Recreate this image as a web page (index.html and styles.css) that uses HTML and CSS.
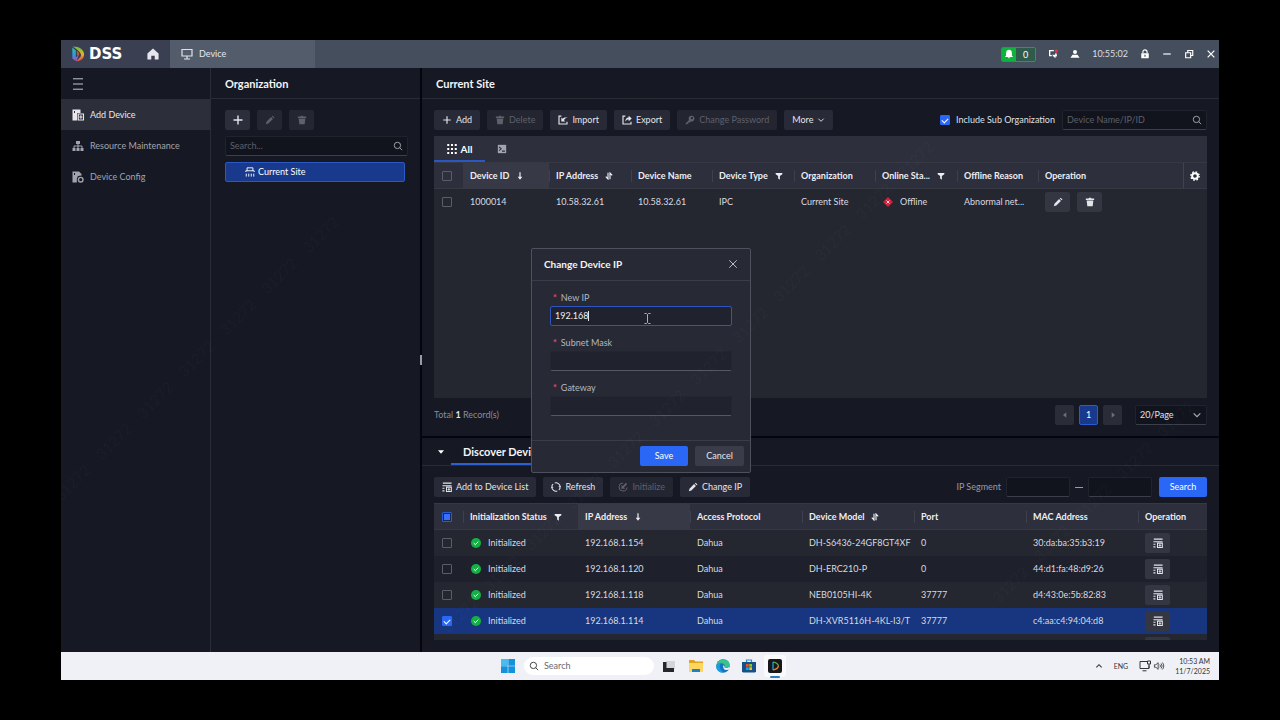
FILE: index.html
```html
<!DOCTYPE html>
<html lang="en">
<head>
<meta charset="utf-8">
<title>DSS - Device</title>
<link rel="stylesheet" href="styles.css">
</head>
<body>
<svg class="defs" aria-hidden="true">
  <symbol id="plus" viewBox="0 0 12 12"><path d="M6 1.5v9M1.5 6h9" stroke="currentColor" stroke-width="1.4" fill="none"/></symbol>
  <symbol id="pencil" viewBox="0 0 12 12"><path d="M1 11l.8-3 5.500-5.500 2.200 2.200L4 10.200zM8.200 1.800l1-1 2.200 2.200-1 1z" fill="currentColor"/></symbol>
  <symbol id="trash" viewBox="0 0 12 12"><path d="M1 1.800h3.300L5 .8h2l.7 1H11v1.700H1zM2 4.300h8L9.200 11H2.800z" fill="currentColor"/></symbol>
  <symbol id="search" viewBox="0 0 12 12"><circle cx="5.3" cy="5.3" r="3.8" fill="none" stroke="currentColor" stroke-width="1.1"/><path d="M8 8l3 3" stroke="currentColor" stroke-width="1.1"/></symbol>
  <symbol id="chev" viewBox="0 0 12 12"><path d="M2 4l4 4 4-4" fill="none" stroke="currentColor" stroke-width="1.4"/></symbol>
  <symbol id="import" viewBox="0 0 12 12"><path d="M4 1.3H1.200v9.500h9.600V8" fill="none" stroke="currentColor" stroke-width="1.4"/><path d="M4 3v4.800h4.800L7.200 6.200c.7-1.500 1.900-2.400 4.300-2.800-2.500-.9-4.700-.2-5.900 1.200z" fill="currentColor"/></symbol>
  <symbol id="export" viewBox="0 0 12 12"><path d="M4 1.300H1.200v9.500h9.600V8" fill="none" stroke="currentColor" stroke-width="1.400"/><path d="M4 8c0-3 1.300-4.700 4-4.900V.8l3.700 3.400L8 7.500V5.300C6 5.300 5 6 4 8z" fill="currentColor"/></symbol>
  <symbol id="key" viewBox="0 0 12 12"><path d="M4.800 6A3.500 3.500 0 1 1 7 7.700L5.500 9H4v1.500H2.800L1.500 11.500.5 10.500z" fill="currentColor"/><circle cx="8.300" cy="3.800" r="1.300" fill="#232531"/></symbol>
  <symbol id="funnel" viewBox="0 0 12 12"><path d="M1 1.500h10v1.700L7.300 6v5.500L4.700 9.800V6L1 3.200z" fill="currentColor"/></symbol>
  <symbol id="down" viewBox="0 0 12 12"><path d="M6 .5v9" stroke="currentColor" stroke-width="1.800"/><path d="M2.500 7h7L6 11.500z" fill="currentColor"/></symbol>
  <symbol id="sort" viewBox="0 0 12 12"><path d="M4.500 1v9.500L1.200 7M7.500 11V1.500l3.300 3.500" fill="none" stroke="currentColor" stroke-width="1.700"/></symbol>
  <symbol id="addlist" viewBox="0 0 12 12"><path d="M1 1.300h10.500M.5 4.400H11.500M.5 7.500h2.500M.5 10.600h2.500" fill="none" stroke="currentColor" stroke-width="1.300"/><path fill-rule="evenodd" d="M4.800 5.500h7v6.500h-7zM6 6.800v4h4.600v-4zM7.700 7.300h1.200v1h1.100v1.100H8.900v1H7.700v-1H6.600V8.300h1.100z" fill="currentColor"/></symbol>
  <symbol id="refresh" viewBox="0 0 12 12"><path d="M4.500 1.200A5 5 0 0 1 11 5.800M7.500 10.800A5 5 0 0 1 1 6.200M1 5a5 5 0 0 1 1.600-2.500M11 7a5 5 0 0 1-1.600 2.500" fill="none" stroke="currentColor" stroke-width="1.300"/><path d="M9 5h3.500l-1.700 2.500zM-.5 7H3L1.200 4.500z" fill="currentColor"/></symbol>
  <symbol id="init" viewBox="0 0 12 12"><path d="M6 1.200A4.800 4.800 0 1 0 10.800 6.500" fill="none" stroke="currentColor" stroke-width="1.200"/><path d="M4 3.500V8h4.500L7.200 6.500 11 2.500 9.500 1 5.500 5z" fill="currentColor"/></symbol>
  <symbol id="ok" viewBox="0 0 12 12"><circle cx="6" cy="6" r="6" fill="#15b045"/><path d="M3.200 6l2 2 3.500-3.600" fill="none" stroke="#fff" stroke-width="1.200"/></symbol>
  <linearGradient id="rim" x1="0" y1="0" x2="0" y2="1"><stop offset="0" stop-color="#5fc04a"/><stop offset=".5" stop-color="#e8b02a"/><stop offset="1" stop-color="#e2453a"/></linearGradient>
  <linearGradient id="stem" x1="0" y1="0" x2="0" y2="1"><stop offset="0" stop-color="#2fc3a0"/><stop offset=".5" stop-color="#2a9de0"/><stop offset="1" stop-color="#a74fb0"/></linearGradient>
  <symbol id="dsslogo" viewBox="0 0 16 18"><path d="M2 .5C10 .5 15 4.500 15 9.500c0 4-3.500 7.500-9 8l3.500-4c2-1.200 2.500-3 1.500-5C9.500 5.500 6 3.500 2 .5z" fill="url(#rim)"/><path d="M1.500 1.500L5.500 5v8l3-2.500-2 6.500-2.500-1-2.500-2z" fill="url(#stem)"/><path d="M6.500 5.500c3 1.500 3.500 4 1 6.500z" fill="#e0572e"/></symbol>
</svg>

<div class="app">
  <header class="titlebar">
    <div class="brand"><svg class="logo"><use href="#dsslogo"/></svg><span class="brand-name">DSS</span>
      <button class="plain home" aria-label="Home"><svg class="i12" viewBox="0 0 14 14"><path d="M7 .5l6.500 6V13.500H9V9H5v4.500H.5v-7z" fill="#e6e7ec"/></svg></button>
    </div>
    <a class="apptab" href="#"><svg class="i12" viewBox="0 0 12 12"><path d="M1 1.500h10v6.500H1zM6 8v2.500M3 11h6" fill="none" stroke="#dfe3ea" stroke-width="1.200"/></svg>Device</a>
    <div class="status">
      <button class="bell" aria-label="Alarms 0"><span class="bell-ico"><svg class="i10" viewBox="0 0 12 12"><path d="M6 1c2.500 0 3.500 2 3.500 4v3l1.500 1.500H1L2.500 8V5c0-2 1-4 3.500-4zM4.500 10h3L6 11.500z" fill="#fff"/></svg></span><span class="bell-n">0</span></button>
      <button class="plain" aria-label="Messages"><svg class="i10" viewBox="0 0 12 12"><path d="M7 2H2v6h2.500M9.500 5v3.500" fill="none" stroke="#fff" stroke-width="1.600"/><path d="M5 7h5.500v2H9v2L6.500 9z" fill="#fff"/><circle cx="10" cy="2.500" r="1.900" fill="#f0303e"/></svg></button>
      <button class="plain" aria-label="User"><svg class="i10" viewBox="0 0 12 12"><circle cx="6" cy="3.500" r="2.400" fill="#fff"/><path d="M3 7h6l2.500 3.500H.5z" fill="#fff"/></svg></button>
      <time class="clock">10:55:02</time>
      <button class="plain" aria-label="Lock"><svg class="i10" viewBox="0 0 12 12"><path d="M3.500 5V3.500a2.500 2.500 0 0 1 5 0V5" fill="none" stroke="#fff" stroke-width="1.400"/><path fill-rule="evenodd" d="M1.500 5h9v6h-9zM5.300 6.800v2.400h1.400V6.800z" fill="#fff"/></svg></button>
      <button class="plain" aria-label="Minimize"><svg class="i10" viewBox="0 0 12 12"><path d="M1.500 6h9" stroke="#fff" stroke-width="1.400"/></svg></button>
      <button class="plain" aria-label="Restore"><svg class="i10" viewBox="0 0 12 12"><path d="M2 4.500h6v6H2zM4.500 4V1.800h6v6H8.500" fill="none" stroke="#fff" stroke-width="1.400"/></svg></button>
      <button class="plain" aria-label="Close"><svg class="i10" viewBox="0 0 12 12"><path d="M2 2l8 8M10 2l-8 8" stroke="#fff" stroke-width="1.500"/></svg></button>
    </div>
  </header>

  <div class="body">
    <nav class="side">
      <button class="plain burger" aria-label="Menu"><svg class="i12" viewBox="0 0 12 12"><path d="M1 .8h10M1 6h10M1 11.200h10" stroke="#c5c6cd" stroke-width="1"/></svg></button>
      <a href="#" class="nav-item active"><svg class="i12" viewBox="0 0 12 12"><path fill-rule="evenodd" d="M.5.5h8V4H5.200v7.500H.5zM2 2v2h1V2z" fill="currentColor"/><path d="M6.300 5h5.200v6H6.300zM8.900 6.300v3.400M7.200 8h3.400" fill="none" stroke="currentColor" stroke-width="1.100"/></svg>Add Device</a>
      <a href="#" class="nav-item"><svg class="i12" viewBox="0 0 12 12"><path d="M4 1h4v3H4zM.5 8h3v3h-3zM4.500 8h3v3h-3zM8.500 8h3v3h-3z" fill="currentColor"/><path d="M6 4v4M2 8V6h8v2" fill="none" stroke="currentColor"/></svg>Resource Maintenance</a>
      <a href="#" class="nav-item"><svg class="i12" viewBox="0 0 12 12"><path fill-rule="evenodd" d="M.5.5H7l2.500 2.500v1.500L6 5 4.800 7.500v4H.5zM2 2v2h1V2z" fill="currentColor"/><circle cx="8.700" cy="8.700" r="2.300" fill="none" stroke="currentColor" stroke-width="1.400"/></svg>Device Config</a>
    </nav>

    <section class="org">
      <h2 class="head">Organization</h2>
      <div class="org-body">
        <div class="org-tools">
          <button class="btn sq" aria-label="Add"><svg class="i12"><use href="#plus"/></svg></button>
          <button class="btn sq" aria-label="Edit" disabled><svg class="i10"><use href="#pencil"/></svg></button>
          <button class="btn sq" aria-label="Delete" disabled><svg class="i10"><use href="#trash"/></svg></button>
        </div>
        <label class="box"><input type="text" placeholder="Search..." aria-label="Search organizations"><svg class="i10"><use href="#search"/></svg></label>
        <button class="tree"><svg class="i10" viewBox="0 0 12 12"><path d="M2.500 4.500V1h7v3.500M1 6V4.500h10V6M1.500 11.500V8M4.500 11.500V8M7.500 11.500V8M10.500 11.500V8" fill="none" stroke="#fff" stroke-width="1.100"/></svg>Current Site</button>
      </div>
      <span class="grip"></span>
    </section>

    <main class="main">
      <section class="devices">
        <h2 class="head">Current Site</h2>
        <div class="pad">
          <div class="tools">
            <button class="btn"><svg class="i10"><use href="#plus"/></svg>Add</button>
            <button class="btn" disabled><svg class="i10"><use href="#trash"/></svg>Delete</button>
            <button class="btn"><svg class="i10"><use href="#import"/></svg>Import</button>
            <button class="btn"><svg class="i10"><use href="#export"/></svg>Export</button>
            <button class="btn" disabled><svg class="i10"><use href="#key"/></svg>Change Password</button>
            <button class="btn more">More<svg class="i8"><use href="#chev"/></svg></button>
            <label class="include"><input class="cb" type="checkbox" checked>Include Sub Organization</label>
            <label class="box find"><input type="text" placeholder="Device Name/IP/ID" aria-label="Find device"><svg class="i10"><use href="#search"/></svg></label>
          </div>
          <div class="panel">
            <div class="tabs">
              <button class="plain tab on"><svg class="i10" viewBox="0 0 12 12"><path d="M1.500 0v12M6 0v12M10.500 0v12" stroke="#fff" stroke-width="2.400" stroke-dasharray="2.400 2.400"/></svg>All</button>
              <button class="plain tab" aria-label="Encoder"><svg class="i10" viewBox="0 0 12 12"><path d="M1 1h10v10H1z" fill="#a3a5ae"/><path d="M2.500 3.500L5 5.800 2.500 8M6 8.500h3.500" fill="none" stroke="#2d2f3c" stroke-width="1.300"/></svg></button>
            </div>
            <table class="grid">
              <colgroup><col class="c-cb"><col class="c-id"><col class="c-a"><col class="c-b"><col class="c-a"><col class="c-b"><col class="c-a"><col class="c-b"><col><col class="c-gear"></colgroup>
              <thead><tr>
                <th><input class="cb" type="checkbox" aria-label="Select all"></th>
                <th class="sorted">Device ID<svg class="i8"><use href="#down"/></svg></th>
                <th>IP Address<svg class="i8"><use href="#sort"/></svg></th>
                <th>Device Name</th>
                <th>Device Type<svg class="i8"><use href="#funnel"/></svg></th>
                <th>Organization</th>
                <th>Online Sta...<svg class="i8"><use href="#funnel"/></svg></th>
                <th>Offline Reason</th>
                <th>Operation</th>
                <th class="gear"><button class="plain" aria-label="Columns"><svg class="i10" viewBox="0 0 12 12"><circle cx="6" cy="6" r="3.400" fill="none" stroke="#fff" stroke-width="2.400"/><circle cx="6" cy="6" r="5" fill="none" stroke="#fff" stroke-width="1.600" stroke-dasharray="2 1.930"/></svg></button></th>
              </tr></thead>
              <tbody><tr>
                <td><input class="cb" type="checkbox" aria-label="Select 1000014"></td>
                <td>1000014</td><td>10.58.32.61</td><td>10.58.32.61</td><td>IPC</td><td>Current Site</td>
                <td><svg class="i10 lead" viewBox="0 0 12 12"><path d="M6 0l6 6-6 6-6-6z" fill="#d81e3a"/><path d="M4.200 4.200l3.600 3.600M7.800 4.200L4.200 7.800" stroke="#fff"/></svg>Offline</td>
                <td>Abnormal net...</td>
                <td><span class="ops"><button class="btn sq" aria-label="Edit"><svg class="i10"><use href="#pencil"/></svg></button><button class="btn sq" aria-label="Delete"><svg class="i10"><use href="#trash"/></svg></button></span></td>
                <td></td>
              </tr></tbody>
            </table>
          </div>
          <div class="pager">
            <span class="total">Total <b>1</b> Record(s)</span>
            <button class="btn pg" aria-label="Previous" disabled><svg class="i8" viewBox="0 0 12 12"><path d="M8 2v8L3 6z" fill="currentColor"/></svg></button>
            <button class="btn pg cur">1</button>
            <button class="btn pg" aria-label="Next" disabled><svg class="i8" viewBox="0 0 12 12"><path d="M4 2v8l5-4z" fill="currentColor"/></svg></button>
            <label class="box size"><select aria-label="Page size"><option>20/Page</option></select><svg class="i10"><use href="#chev"/></svg></label>
          </div>
        </div>
      </section>

      <section class="discover">
        <div class="disc-head">
          <button class="plain fold" aria-label="Collapse"><svg class="i8" viewBox="0 0 12 12"><path d="M1.500 3.500h9L6 8.500z" fill="#fff"/></svg></button>
          <h2 class="disc-tab">Discover Device</h2>
        </div>
        <div class="pad">
          <div class="tools">
            <button class="btn"><svg class="i10"><use href="#addlist"/></svg>Add to Device List</button>
            <button class="btn"><svg class="i10"><use href="#refresh"/></svg>Refresh</button>
            <button class="btn" disabled><svg class="i10"><use href="#init"/></svg>Initialize</button>
            <button class="btn"><svg class="i10"><use href="#pencil"/></svg>Change IP</button>
            <label class="seg" for="seg-from">IP Segment</label>
            <span class="box ip"><input id="seg-from" type="text"></span>
            <span class="dash"></span>
            <span class="box ip"><input type="text" aria-label="IP segment end"></span>
            <button class="btn primary">Search</button>
          </div>
          <div class="list">
            <table class="grid zebra">
              <colgroup><col class="c-cb"><col class="c-st"><col class="c-w"><col class="c-w"><col class="c-w"><col class="c-w"><col class="c-w"><col></colgroup>
              <thead><tr>
                <th><input class="cb part" type="checkbox" aria-label="Select all found"></th>
                <th>Initialization Status<svg class="i8"><use href="#funnel"/></svg></th>
                <th class="sorted">IP Address<svg class="i8"><use href="#down"/></svg></th>
                <th>Access Protocol</th>
                <th>Device Model<svg class="i8"><use href="#sort"/></svg></th>
                <th>Port</th><th>MAC Address</th><th>Operation</th>
              </tr></thead>
              <tbody>
                <tr><td><input class="cb" type="checkbox" aria-label="Select 192.168.1.154"></td><td><svg class="i10 lead"><use href="#ok"/></svg>Initialized</td><td>192.168.1.154</td><td>Dahua</td><td>DH-S6436-24GF8GT4XF</td><td>0</td><td>30:da:ba:35:b3:19</td><td><button class="btn sq" aria-label="Add to list"><svg class="i10"><use href="#addlist"/></svg></button></td></tr>
                <tr><td><input class="cb" type="checkbox" aria-label="Select 192.168.1.120"></td><td><svg class="i10 lead"><use href="#ok"/></svg>Initialized</td><td>192.168.1.120</td><td>Dahua</td><td>DH-ERC210-P</td><td>0</td><td>44:d1:fa:48:d9:26</td><td><button class="btn sq" aria-label="Add to list"><svg class="i10"><use href="#addlist"/></svg></button></td></tr>
                <tr><td><input class="cb" type="checkbox" aria-label="Select 192.168.1.118"></td><td><svg class="i10 lead"><use href="#ok"/></svg>Initialized</td><td>192.168.1.118</td><td>Dahua</td><td>NEB0105HI-4K</td><td>37777</td><td>d4:43:0e:5b:82:83</td><td><button class="btn sq" aria-label="Add to list"><svg class="i10"><use href="#addlist"/></svg></button></td></tr>
                <tr class="sel"><td><input class="cb" type="checkbox" checked aria-label="Select 192.168.1.114"></td><td><svg class="i10 lead"><use href="#ok"/></svg>Initialized</td><td>192.168.1.114</td><td>Dahua</td><td>DH-XVR5116H-4KL-I3/T</td><td>37777</td><td>c4:aa:c4:94:04:d8</td><td><button class="btn sq" aria-label="Add to list"><svg class="i10"><use href="#addlist"/></svg></button></td></tr>
                <tr><td></td><td></td><td></td><td></td><td></td><td></td><td></td><td><button class="btn sq" aria-label="Add to list"></button></td></tr>
              </tbody>
            </table>
          </div>
        </div>
      </section>
    </main>
  </div>

  <div class="scrim">
    <form class="dialog" role="dialog" aria-labelledby="dlg-title">
      <div class="dlg-head"><h2 id="dlg-title">Change Device IP</h2><button type="button" class="plain" aria-label="Close dialog"><svg class="i10" viewBox="0 0 12 12"><path d="M1.500 1.500l9 9M10.500 1.500l-9 9" stroke="#b9bbc3" stroke-width="1.200"/></svg></button></div>
      <div class="dlg-body">
        <div class="field"><label for="new-ip">New IP</label><div class="inwrap"><input id="new-ip" class="focus" type="text" value="192.168"><span class="caret"></span><svg class="ibeam" viewBox="0 0 7 11"><path d="M.5.5h2l1 1 1-1h2M.5 10.500h2l1-1 1 1h2M3.500 1.500v8" fill="none" stroke="#aeb0b8"/></svg></div></div>
        <div class="field"><label for="mask">Subnet Mask</label><input id="mask" type="text"></div>
        <div class="field"><label for="gw">Gateway</label><input id="gw" type="text"></div>
      </div>
      <div class="dlg-foot"><button type="button" class="btn primary">Save</button><button type="button" class="btn cancel">Cancel</button></div>
    </form>
  </div>
  <div class="marks" aria-hidden="true">
    <div class="mark m1"><span>31272</span><span>31272</span><span>31272</span><span>31272</span><span>31272</span><span>31272</span><span>31272</span></div>
    <div class="mark m2"><span>31272</span><span>31272</span><span>31272</span><span>31272</span><span>31272</span><span>31272</span><span>31272</span><span>31272</span><span>31272</span><span>31272</span><span>31272</span><span>31272</span></div>
    <div class="mark m3"><span>31272</span><span>31272</span><span>31272</span><span>31272</span><span>31272</span></div>
  </div>
</div>

<footer class="taskbar">
  <div class="tb-center">
    <button class="plain" aria-label="Start"><svg class="i14" viewBox="0 0 14 14"><path d="M0 0h6.700v6.700H0zM7.300 0H14v6.700H7.300zM0 7.300h6.700V14H0zM7.300 7.300H14V14H7.300z" fill="#1493dc"/><path d="M0 0h6.700v6.700H0z" fill="#45bdf0"/></svg></button>
    <label class="tb-search"><svg class="i10"><use href="#search"/></svg><input type="text" placeholder="Search" aria-label="Search Windows"></label>
    <button class="plain" aria-label="Task view"><svg class="i14" viewBox="0 0 14 14"><path d="M4 2h9v8H4z" fill="#d4d5d9"/><path d="M1 3h3.500v6H12v4H1z" fill="#26272b"/></svg></button>
    <button class="plain" aria-label="Explorer"><svg class="i16" viewBox="0 0 16 14"><path d="M1 1h5l1.500 1.500H15V13H1z" fill="#e3a21a"/><path d="M1 4h14v9H1z" fill="#ffd75e"/><path d="M4 10h8v3H4z" fill="#1c82c4"/></svg></button>
    <button class="plain" aria-label="Edge"><svg class="i14" viewBox="0 0 14 14"><circle cx="7" cy="7" r="6.800" fill="#1674c4"/><path d="M.3 6.500C1 2.500 4 .2 7.300.2c4 0 6.500 3 6.500 5.500 0 2.200-1.800 3.300-3.600 3.300-1.500 0-2-.6-1.500-1.300C9.300 6 7.500 4.300 5 4.300c-2 0-3.800.8-4.700 2.200z" fill="#37c28f"/><path d="M.3 6.500c1-1.500 3-2.200 4.700-2.200-1.800 1.500-2.300 5.500 2 8.800C3 14.500 0 10.500.3 6.500z" fill="#1d9de0"/><path d="M8.700 7.700c-.5.700 0 1.300 1.500 1.300 1.200 0 2.500-.4 3.200-1.500L14 10.500l-4 .5C7 10.500 7 7 7.500 6z" fill="#f0f1f6"/></svg></button>
    <button class="plain" aria-label="Store"><svg class="i14" viewBox="0 0 14 14"><path d="M4.500 3V1h5v2" fill="none" stroke="#1f8fd4" stroke-width="1.200"/><path d="M0 3h14v9.500l-1 1H1l-1-1z" fill="#174f86"/><path d="M4 5h2.700v2.700H4z" fill="#f1511b"/><path d="M7.300 5H10v2.700H7.300z" fill="#80cc28"/><path d="M4 8.300h2.700V11H4z" fill="#00adef"/><path d="M7.300 8.300H10V11H7.300z" fill="#fbbc09"/></svg></button>
    <button class="plain tile" aria-label="DSS client"><svg class="i14" viewBox="0 0 14 14"><rect width="14" height="14" rx="2" fill="#17181c"/><path d="M5 3v8" stroke="#31a8dc" stroke-width="1.200"/><path d="M5 3c3 .5 5 2 5.500 4" fill="none" stroke="#5bbd4a" stroke-width="1.200"/><path d="M10.500 7c-.5 2-2.500 3.500-5.500 4" fill="none" stroke="#e58a2a" stroke-width="1.200"/></svg></button>
  </div>
  <div class="tb-right">
    <button class="plain" aria-label="Hidden icons"><svg class="i8" viewBox="0 0 12 12"><path d="M2 8l4-4 4 4" fill="none" stroke="#33343a" stroke-width="1.600"/></svg></button>
    <span class="lang">ENG</span>
    <span class="tray"><svg class="i12" viewBox="0 0 12 12"><path d="M8 1.500H1v7h9V5.500M3.500 10.800h4" fill="none" stroke="#33343a"/><path d="M8.500 1h3v3h-3zM10 4v4" fill="none" stroke="#33343a"/></svg><svg class="i10" viewBox="0 0 12 12"><path d="M.5 4.500h1.800L5 2v8L2.300 7.500H.5zM7 4.300a2.500 2.500 0 0 1 0 3.400M8.500 3a4.500 4.500 0 0 1 0 6M10 1.800a6 6 0 0 1 0 8.400" fill="none" stroke="#33343a"/></svg></span>
    <span class="when">10:53 AM<br>11/7/2025</span>
  </div>
</footer>
</body>
</html>
```
FILE: styles.css
```css
* { box-sizing: border-box; }
body {
  margin: 0;
  padding: 40px 61px;
  min-height: 100vh;
  display: flex;
  flex-direction: column;
  background: #000;
  color: #d6d7dd;
  font: 9px/12px Lato, "Open Sans", sans-serif;
}
button, input, select { font: inherit; color: inherit; margin: 0; }
h2 { margin: 0; font-size: 11px; line-height: 14px; font-weight: 700; color: #f4f4f7; }
a { color: inherit; text-decoration: none; }
svg { display: block; flex: none; overflow: visible; }
.defs { position: absolute; width: 0; height: 0; }
.i8 { width: 8px; height: 8px; }
.i10 { width: 10px; height: 10px; }
.i12 { width: 12px; height: 12px; }
.i14 { width: 14px; height: 14px; }
.i16 { width: 16px; height: 14px; }
.plain { border: 0; padding: 0; background: none; display: flex; align-items: center; justify-content: center; }

.app { position: relative; flex: 1; display: flex; flex-direction: column; background: #161823; overflow: hidden; }

.titlebar { display: flex; height: 28px; background: #454e5c; flex: none; }
.brand { width: 109px; display: flex; align-items: center; padding-left: 10px; background: #3b3f52; }
.logo { width: 14px; height: 16px; }
.brand-name { margin-left: 4px; font: 700 15px/18px "DejaVu Sans", sans-serif; color: #fff; }
.home { margin-left: 25px; }
.apptab { width: 145px; display: flex; align-items: center; gap: 6px; padding-left: 11px; background: #535c6a; color: #e6e8ec; }
.status { margin-left: auto; display: flex; align-items: center; gap: 12px; padding-right: 3px; }
.bell { display: flex; width: 35px; height: 15px; padding: 0; border: 1px solid #12a83c; border-radius: 2px; background: #2f5a4c; color: #fff; overflow: hidden; }
.bell-ico { width: 14px; height: 13px; display: flex; align-items: center; justify-content: center; background: #0fb23c; }
.bell-n { flex: 1; line-height: 13px; text-align: center; }
.clock { color: #dcdee3; }

.body { flex: 1; display: flex; min-height: 0; }
.side { width: 150px; flex: none; border-right: 1px solid #2a2c37; }
.burger { height: 31px; padding-left: 11px; }
.nav-item { display: flex; align-items: center; gap: 6px; height: 31px; padding-left: 11px; color: #a2a4ad; }
.nav-item.active { background: #2c2e3a; color: #e8e8ec; }

.org { position: relative; width: 211px; flex: none; border-right: 2px solid #05060c; }
.head { height: 31px; padding: 9px 14px 0; border-bottom: 1px solid #292b35; }
.org-body { padding: 11px 12px 0 14px; display: flex; flex-direction: column; gap: 6px; }
.org-tools { display: flex; gap: 7px; }
.tree { display: flex; align-items: center; gap: 3px; height: 20px; margin-right: 3px; padding: 0 0 0 19px; border: 1px solid #2a58c4; border-radius: 2px; background: #18398c; color: #fff; }
.grip { position: absolute; right: -2px; top: 287px; width: 2px; height: 10px; background: #9a9ca5; }

.btn { display: inline-flex; align-items: center; justify-content: center; gap: 4px; height: 20px; padding: 0 8px; border: 0; border-radius: 2px; background: #282a37; color: #e4e5ea; white-space: nowrap; }
.btn:disabled { color: #5e606b; background: #232531; }
.btn.sq { width: 25px; padding: 0; background: #2c2e3b; }
.btn.sq:disabled { background: #242632; }
.btn.primary { width: 48px; padding: 0; background: #2a67f6; color: #fff; }

.box { display: flex; align-items: center; height: 20px; padding: 0 4px; border: 1px solid #20222d; border-bottom-color: #3c3e49; border-radius: 2px; background: #12141d; color: #a9abb4; }
.box input { flex: 1; min-width: 0; width: 100%; padding: 0; border: 0; background: none; outline: 0; }
.box input::placeholder { color: #5d5f6a; opacity: 1; }

.main { flex: 1; min-width: 0; display: flex; flex-direction: column; }
.devices { flex: 1; display: flex; flex-direction: column; border-bottom: 2px solid #05060c; }
.pad { flex: 1; padding: 11px 12px 0; display: flex; flex-direction: column; }
.discover { flex: none; height: 214px; }
.tools { display: flex; align-items: center; gap: 7px; }
.include { display: flex; align-items: center; gap: 6px; margin-left: auto; color: #dfe0e5; }
.find { width: 145px; }

.cb { appearance: none; display: block; width: 10px; height: 10px; border: 1px solid #5b5d69; border-radius: 1px; background: none; }
.cb:checked { border-color: #2a67f6; background: #2a67f6; }
.cb:checked::before { content: ""; display: block; width: 5px; height: 3px; margin: 2px 0 0 1px; border: solid #fff; border-width: 0 0 1px 1px; rotate: -45deg; }
.cb.part { border-color: #2c5bd0; background: #1b2750; }
.cb.part::before { content: ""; display: block; width: 6px; height: 6px; margin: 1px; background: #3570ff; }

.panel { flex: 1; margin-top: 6px; background: #242630; }
.tabs { display: flex; height: 26px; background: #2d2f3c; }
.tab { width: 51px; gap: 4px; color: #fff; font-weight: 700; font-size: 10px; }
.tab:not(.on) { width: 34px; }
.tab.on { border-bottom: 2px solid #2b57c0; padding-top: 2px; }

.grid { width: 100%; table-layout: fixed; border-collapse: collapse; }
.c-cb { width: 29px; }
.c-id { width: 86px; }
.c-a { width: 82px; }
.c-b { width: 81px; }
.c-gear { width: 24px; }
.c-st { width: 115px; }
.c-w { width: 112px; }
.grid th, .grid td { height: 26px; padding: 0 0 0 7px; text-align: left; white-space: nowrap; }
.grid th:first-child, .grid td:first-child { padding-left: 8px; }
.grid th { background: #2d2f3c linear-gradient(#3e404c, #3e404c) left center / 1px 12px no-repeat; color: #eeeef2; font-weight: 700; border-top: 1px solid #363844; border-bottom: 1px solid #363844; }
.grid th:first-child { background: #2d2f3c; }
.grid th.sorted { background: #373a46; }
.grid th svg { display: inline-block; margin-left: 7px; vertical-align: -1px; }
.grid th.gear { padding: 0; border-left: 1px solid #414350; background: #2d2f3c; }
.gear .plain { width: 100%; }
.grid th.gear svg { margin: 0; }
.grid td { color: #d9dae0; }
.lead { display: inline-block; vertical-align: -2px; margin: 0 7px 0 1px; }
.ops { display: flex; gap: 7px; }
.grid td .sq { background: #343642; vertical-align: middle; }

.pager { display: flex; align-items: center; gap: 5px; height: 38px; padding-bottom: 4px; }
.total { margin-right: auto; color: #8b8d96; }
.total b { color: #e4e5ea; }
.pg { width: 19px; padding: 0; }
.pg:disabled { background: #2a2c38; color: #6c6e79; }
.pg.cur { border: 1px solid #2a5ad0; background: #18398c; color: #fff; }
.size { width: 72px; margin-left: 8px; }
.size select { flex: 1; min-width: 0; appearance: none; border: 0; padding: 0; background: none; color: #e0e1e6; }

.disc-head { display: flex; height: 28px; border-bottom: 1px solid #292b35; padding-left: 15px; }
.fold { width: 8px; margin-right: 6px; }
.disc-tab { padding: 7px 12px 0; border-bottom: 2px solid #2d5ed2; }
.seg { margin: 0 -2px 0 auto; color: #9a9ca5; }
.ip { width: 64px; }
.dash { width: 8px; height: 1px; margin: 0 -2px; background: #9a9ca5; }
.list { height: 137px; margin-top: 6px; overflow: hidden; }
.zebra tbody tr { background: #1e202b; }
.zebra tbody tr:nth-child(odd) { background: #242630; }
.zebra tbody tr.sel { background: #17367f; }

.scrim { position: fixed; inset: 0; display: grid; place-items: center; padding-left: 2px; }
.dialog { width: 220px; border: 1px solid #4e515b; border-radius: 2px; background: #272a35; }
.dlg-head { display: flex; align-items: center; justify-content: space-between; height: 32px; padding: 0 12px; border-bottom: 1px solid #3a3d48; }
.dlg-head h2 { font-size: 10px; }
.dlg-body { display: flex; flex-direction: column; gap: 10px; height: 159px; padding: 10px 18px 0; }
.field label { display: block; line-height: 14px; padding: 0 0 1px 3px; color: #b4b6be; }
.field label::before { content: "*"; color: #e8457a; margin-right: 4px; font-weight: 700; }
.field input { display: block; width: 100%; height: 20px; padding: 0 4px; border: 1px solid #232630; border-bottom-color: #555862; border-radius: 2px; background: #20232d; color: #f0f0f4; outline: 0; }
.field input.focus { border-color: #2f55c0; }
.inwrap { position: relative; }
.caret { position: absolute; left: 38px; top: 5px; width: 1px; height: 10px; background: #e8e8ec; }
.ibeam { position: absolute; left: 94px; top: 7px; width: 7px; height: 11px; }
.dlg-foot { display: flex; justify-content: flex-end; gap: 7px; padding: 5px 6px 6px; border-top: 1px solid #3a3d48; }
.btn.cancel { width: 49px; padding: 0; background: #3a3d49; }

.marks { position: absolute; inset: 0; overflow: hidden; pointer-events: none; }
.mark { position: absolute; display: flex; gap: 15px; rotate: -45deg; transform-origin: 0 100%; font-size: 15px; line-height: 18px; color: rgba(255, 255, 255, 0.025); }
.m1 { left: 2px; top: 446px; }
.m2 { left: 390px; top: 578px; }
.m3 { left: 940px; top: 548px; }

.taskbar { display: grid; grid-template-columns: 1fr auto 1fr; height: 28px; flex: none; background: #f0f1f6; color: #33343a; }
.tb-center { grid-column: 2; display: flex; align-items: center; gap: 12px; margin-left: 7px; }
.tb-search { display: flex; align-items: center; gap: 5px; width: 130px; height: 18px; margin: 0 -4px 0 -3px; padding: 0 5px; border-radius: 9px; background: #fff; }
.tb-search input { flex: 1; min-width: 0; padding: 0; border: 0; background: none; outline: 0; }
.tb-search input::placeholder { color: #666870; opacity: 1; }
.tile { position: relative; width: 22px; height: 22px; margin-left: -4px; border-radius: 3px; background: #fafafc; }
.tile::after { content: ""; position: absolute; left: 6px; bottom: -1px; width: 10px; height: 2px; border-radius: 1px; background: #2a7fb8; }
.tb-right { display: flex; align-items: center; justify-content: flex-end; gap: 11px; padding-right: 9px; }
.lang, .when { font-size: 7px; line-height: 10px; }
.when { text-align: right; }
.tray { display: flex; align-items: center; gap: 3px; }
```
